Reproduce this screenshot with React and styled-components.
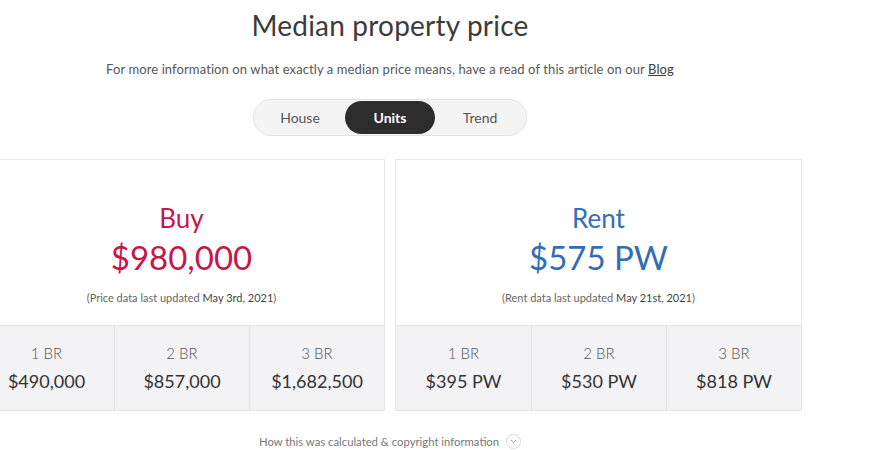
import styled, { createGlobalStyle } from "styled-components";

const GlobalStyle = createGlobalStyle`
  html, body {
    margin: 0;
    padding: 0;
    background: #fff;
    font-family: Lato, "Open Sans", sans-serif;
    overflow: hidden;
  }
`;

const Page = styled.main`
  width: 824px;
  margin-left: -22px;
  display: flex;
  flex-direction: column;
  align-items: center;
`;

const Title = styled.h1`
  margin: 8px 0 0;
  font-size: 28px;
  font-weight: 400;
  color: #3b3b3b;
  letter-spacing: 0.2px;
  line-height: 34px;
`;

const Intro = styled.p`
  margin: 19px 0 0;
  font-size: 13px;
  letter-spacing: 0.1px;
  color: #575757;
  line-height: 16px;
  a {
    color: #3b3b3b;
    text-decoration: underline;
  }
`;

const Toggle = styled.div`
  margin-top: 22px;
  display: flex;
  padding: 1px;
  border: 1px solid #e3e3e3;
  border-radius: 18px;
  background: #f4f4f4;
`;

const ToggleItem = styled.button`
  width: 90px;
  height: 33px;
  border: none;
  border-radius: 17px;
  font-family: inherit;
  font-size: 14px;
  font-weight: ${(p) => (p.active ? 700 : 400)};
  color: ${(p) => (p.active ? "#fff" : "#555")};
  background: ${(p) => (p.active ? "#2d2d2d" : "transparent")};
  cursor: pointer;
`;

const Cards = styled.section`
  margin-top: 23px;
  width: 100%;
  display: grid;
  grid-template-columns: 1fr 1fr;
  gap: 10px;
`;

const Card = styled.article`
  border: 1px solid #e6e6e6;
  background: #fff;
  display: flex;
  flex-direction: column;
`;

const Headline = styled.div`
  height: 165px;
  display: flex;
  flex-direction: column;
  align-items: center;
  padding-top: 43px;
  box-sizing: border-box;
  color: ${(p) => p.color};
`;

const Kind = styled.div`
  font-size: 26px;
  line-height: 30px;
`;

const Price = styled.div`
  font-size: 33px;
  line-height: 40px;
  margin-top: 4px;
`;

const Updated = styled.div`
  margin-top: 14px;
  font-size: 11px;
  color: #666;
  b {
    font-weight: 400;
    color: #444;
  }
`;

const Rooms = styled.div`
  display: grid;
  grid-template-columns: repeat(3, 1fr);
  background: #f3f2f5;
  border-top: 1px solid #e6e6e6;
  height: 84px;
`;

const Room = styled.div`
  display: flex;
  flex-direction: column;
  align-items: center;
  padding-top: 18px;
  box-sizing: border-box;
  & + & {
    border-left: 1px solid #e2e2e4;
  }
`;

const RoomLabel = styled.div`
  font-size: 15px;
  font-weight: 300;
  color: #555;
  line-height: 18px;
`;

const RoomPrice = styled.div`
  margin-top: 8px;
  font-size: 18px;
  color: #333;
  line-height: 22px;
`;

const Footnote = styled.div`
  margin-top: 23px;
  display: flex;
  align-items: center;
  gap: 7px;
  font-size: 11.3px;
  color: #777;
`;

const Chevron = styled.span`
  width: 13px;
  height: 13px;
  border: 1px solid #d6d6d6;
  border-radius: 50%;
  display: inline-flex;
  align-items: center;
  justify-content: center;
`;

const cards = [
  {
    kind: "Buy",
    price: "$980,000",
    color: "#c4174a",
    note: "(Price data last updated ",
    date: "May 3rd, 2021",
    rooms: [
      ["1 BR", "$490,000"],
      ["2 BR", "$857,000"],
      ["3 BR", "$1,682,500"],
    ],
  },
  {
    kind: "Rent",
    price: "$575 PW",
    color: "#336db5",
    note: "(Rent data last updated ",
    date: "May 21st, 2021",
    rooms: [
      ["1 BR", "$395 PW"],
      ["2 BR", "$530 PW"],
      ["3 BR", "$818 PW"],
    ],
  },
];

const App = () => {
  return (
    <Page>
      <GlobalStyle />
      <Title>Median property price</Title>
      <Intro>
        For more information on what exactly a median price means, have a read
        of this article on our <a href="#">Blog</a>
      </Intro>
      <Toggle>
        <ToggleItem>House</ToggleItem>
        <ToggleItem active>Units</ToggleItem>
        <ToggleItem>Trend</ToggleItem>
      </Toggle>
      <Cards>
        {cards.map((c) => (
          <Card key={c.kind}>
            <Headline color={c.color}>
              <Kind>{c.kind}</Kind>
              <Price>{c.price}</Price>
              <Updated>
                {c.note}
                <b>{c.date}</b>)
              </Updated>
            </Headline>
            <Rooms>
              {c.rooms.map(([label, price]) => (
                <Room key={label}>
                  <RoomLabel>{label}</RoomLabel>
                  <RoomPrice>{price}</RoomPrice>
                </Room>
              ))}
            </Rooms>
          </Card>
        ))}
      </Cards>
      <Footnote>
        How this was calculated &amp; copyright information
        <Chevron>
          <svg width="7" height="5" viewBox="0 0 7 5">
            <path d="M1 1l2.5 2.5L6 1" fill="none" stroke="#999" strokeWidth="1" />
          </svg>
        </Chevron>
      </Footnote>
    </Page>
  );
};

export default App;
